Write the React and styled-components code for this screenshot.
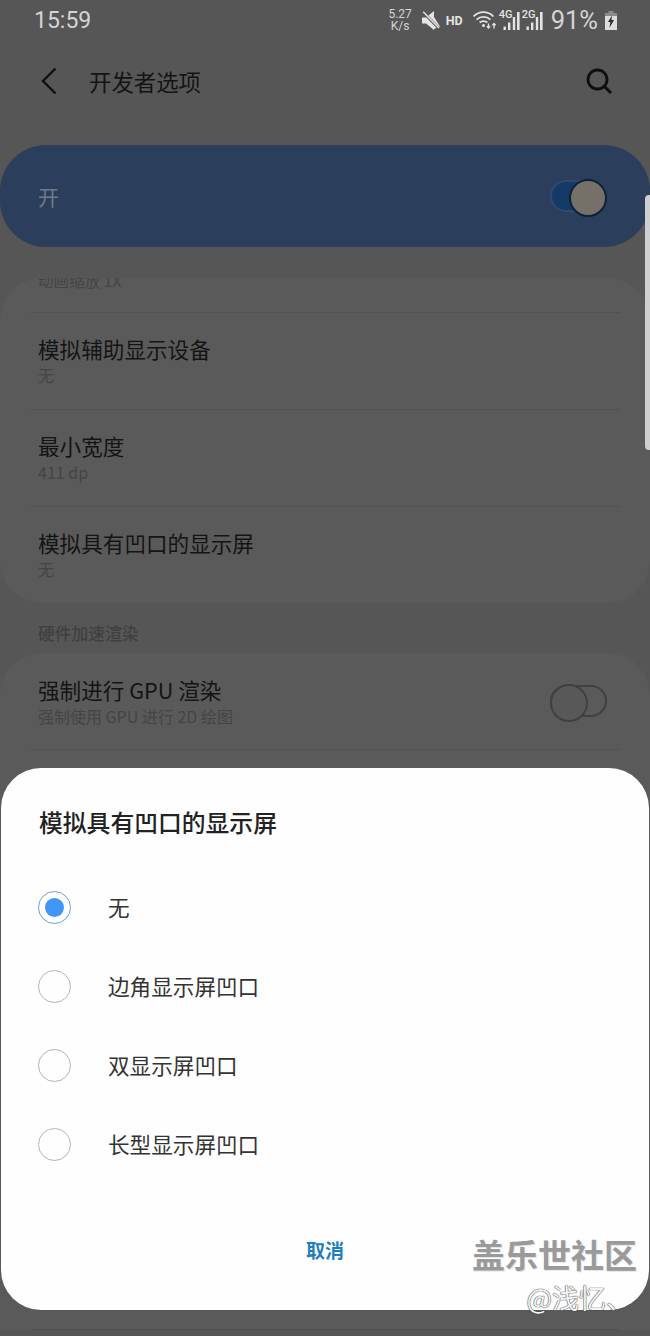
import React from "react";
import styled, { createGlobalStyle } from "styled-components";

const CJK = `"Noto Sans CJK SC", "Noto Sans", sans-serif`;

const GlobalStyle = createGlobalStyle`
  html, body {
    margin: 0;
    padding: 0;
    background: #555555;
  }
  * {
    box-sizing: border-box;
  }
`;

const App = () => {
  return (
    <Page>
      <GlobalStyle />
      <StatusBar>
        <Clock>15:59</Clock>
        <StatusIcons>
          <NetSpeed>
            <span>5.27</span>
            <span>K/s</span>
          </NetSpeed>
          <MuteIcon />
          <HdLabel>HD</HdLabel>
          <WifiIcon />
          <SignalIcon label="4G" />
          <SignalIcon label="2G" />
          <Battery>91%</Battery>
          <BatteryIcon />
        </StatusIcons>
      </StatusBar>

      <Toolbar>
        <ToolbarLeft>
          <svg width="20" height="28" viewBox="0 0 20 28" fill="none">
            <path d="M16.5 1.5 L4 14 L16.5 26.5" stroke="#0f0f0f" strokeWidth="2.4" />
          </svg>
          <ToolbarTitle>开发者选项</ToolbarTitle>
        </ToolbarLeft>
        <svg width="30" height="30" viewBox="0 0 30 30" fill="none">
          <circle cx="13.5" cy="13.5" r="9.5" stroke="#0f0f0f" strokeWidth="2.8" />
          <path d="M20 20 L27 27" stroke="#0f0f0f" strokeWidth="3" />
        </svg>
      </Toolbar>

      <MasterBar>
        <MasterLabel>开</MasterLabel>
        <Switch $on />
      </MasterBar>

      <ClippedCard>
        <ClippedText>动画缩放 1X</ClippedText>
        <Divider />
        <Row title="模拟辅助显示设备" sub="无" />
        <Divider />
        <Row title="最小宽度" sub="411 dp" />
        <Divider />
        <Row title="模拟具有凹口的显示屏" sub="无" />
      </ClippedCard>

      <SectionTitle>硬件加速渲染</SectionTitle>

      <Card>
        <SwitchRow>
          <div>
            <RowTitle>强制进行 GPU 渲染</RowTitle>
            <RowSub>强制使用 GPU 进行 2D 绘图</RowSub>
          </div>
          <Switch />
        </SwitchRow>
        <Divider />
        <CoveredRows />
        <Divider />
      </Card>

      <ScrollThumb />

      <Dialog>
        <DialogTitle>模拟具有凹口的显示屏</DialogTitle>
        <Options>
          <Option>
            <Radio $checked />
            <OptionLabel>无</OptionLabel>
          </Option>
          <Option>
            <Radio />
            <OptionLabel>边角显示屏凹口</OptionLabel>
          </Option>
          <Option>
            <Radio />
            <OptionLabel>双显示屏凹口</OptionLabel>
          </Option>
          <Option>
            <Radio />
            <OptionLabel>长型显示屏凹口</OptionLabel>
          </Option>
        </Options>
        <DialogActions>
          <CancelButton>取消</CancelButton>
        </DialogActions>
      </Dialog>

      <Watermark>
        <WatermarkName>盖乐世社区</WatermarkName>
        <WatermarkUser>@浅忆、</WatermarkUser>
      </Watermark>
    </Page>
  );
};

const Row = ({ title, sub }) => (
  <PlainRow>
    <RowTitle>{title}</RowTitle>
    <RowSub>{sub}</RowSub>
  </PlainRow>
);

const MuteIcon = () => (
  <MuteSvg width="18" height="19" viewBox="0 0 18 19">
    <path d="M0 6.5 H4 L12 0 V19 L4 12.5 H0 Z M12 6 L18 15.5 L12 18 Z" fill="#e4e4e4" />
    <path d="M1 1 L17 17.5" stroke="#555555" strokeWidth="2.8" />
    <path d="M1.2 0.8 L17 17" stroke="#e4e4e4" strokeWidth="1.5" />
  </MuteSvg>
);

const WifiIcon = () => (
  <WifiSvg width="24" height="18" viewBox="0 0 24 18" fill="none" stroke="#e4e4e4" strokeWidth="1.8">
    <path d="M0.6 5.5 C6 -0.3 15 -0.3 20.4 5.5" />
    <path d="M3.6 8.6 C7.5 5 13.5 5 17.4 8.6" />
    <path d="M6.6 11.6 C8.8 10 12.2 10 14.4 11.6" />
    <circle cx="10.5" cy="14.6" r="1.5" fill="#e4e4e4" stroke="none" />
    <path d="M15.5 12.5 V17 M13.9 15.3 L15.5 17 L17.1 15.3" strokeWidth="1.3" />
    <path d="M21 17.5 V12.5 M19.4 14.2 L21 12.5 L22.6 14.2" strokeWidth="1.3" />
  </WifiSvg>
);

const SignalIcon = ({ label }) => (
  <SignalWrap>
    <SignalLabel>{label}</SignalLabel>
    <svg width="21" height="19" viewBox="0 0 21 19" fill="#e4e4e4">
      <rect x="4.5" y="15.5" width="2.4" height="3.5" />
      <rect x="9" y="11.5" width="2.4" height="7.5" />
      <rect x="13.8" y="6" width="2.4" height="13" />
      <rect x="18" y="1" width="2.6" height="18" />
    </svg>
  </SignalWrap>
);

const BatteryIcon = () => (
  <BatterySvg width="12" height="19" viewBox="0 0 12 19">
    <rect x="3.5" y="0" width="5" height="2" fill="#8c8c8c" />
    <rect x="0" y="2" width="12" height="3" fill="#8c8c8c" />
    <rect x="0" y="5" width="12" height="14" fill="#dcdcdc" />
    <path d="M7 4.5 L3 11 H5.4 L4.4 17 L9 9 H6.4 Z" fill="#2a2a2a" />
  </BatterySvg>
);

export default App;

const Page = styled.div`
  position: relative;
  width: 650px;
  height: 1336px;
  overflow: hidden;
  background: #565656;
  font-family: ${CJK};
`;

const StatusBar = styled.div`
  display: flex;
  align-items: center;
  justify-content: space-between;
  height: 40px;
  padding: 0 33px 0 34px;
`;

const Clock = styled.div`
  font-family: Roboto, sans-serif;
  font-size: 23px;
  color: #d4d4d4;
`;

const StatusIcons = styled.div`
  display: flex;
  align-items: center;
`;

const NetSpeed = styled.div`
  display: flex;
  flex-direction: column;
  align-items: center;
  width: 23px;
  font-family: Roboto, sans-serif;
  font-size: 12px;
  line-height: 12px;
  color: #d4d4d4;
`;

const MuteSvg = styled.svg`
  margin-left: 10px;
`;

const HdLabel = styled.span`
  width: 16px;
  margin-left: 6px;
  font-family: Roboto, sans-serif;
  font-size: 12.5px;
  font-weight: 700;
  color: #e4e4e4;
`;

const WifiSvg = styled.svg`
  margin-left: 11px;
`;

const SignalWrap = styled.div`
  position: relative;
  width: 21px;
  height: 19px;
  margin-left: 2px;
`;

const SignalLabel = styled.span`
  position: absolute;
  top: -2px;
  left: 0;
  font-family: Roboto, sans-serif;
  font-size: 11px;
  line-height: 12px;
  font-weight: 500;
  color: #e4e4e4;
`;

const Battery = styled.span`
  margin-left: 8px;
  font-family: Roboto, sans-serif;
  font-size: 25.5px;
  line-height: 30px;
  color: #d4d4d4;
`;

const BatterySvg = styled.svg`
  margin-left: 7px;
`;

const Toolbar = styled.div`
  display: flex;
  align-items: center;
  justify-content: space-between;
  height: 82px;
  padding: 0 36px 0 39px;
`;

const ToolbarLeft = styled.div`
  display: flex;
  align-items: center;
  gap: 30px;
`;

const ToolbarTitle = styled.div`
  font-size: 22.4px;
  color: #141414;
`;

const MasterBar = styled.div`
  display: flex;
  align-items: center;
  justify-content: space-between;
  height: 102px;
  margin-top: 23px;
  padding: 0 43px 0 38px;
  border-radius: 46px;
  background: #2b3f5c;
`;

const MasterLabel = styled.div`
  font-size: 21px;
  color: #6f7a88;
`;

const Switch = styled.div`
  position: relative;
  width: 57px;
  height: 32px;
  border-radius: 16px;
  background: ${(p) => (p.$on ? "#143a68" : "transparent")};
  border: 2px solid ${(p) => (p.$on ? "#2f4a6d" : "#404040")};

  &::after {
    content: "";
    position: absolute;
    top: -3px;
    ${(p) => (p.$on ? "right: -2px;" : "left: -2px;")}
    width: 34px;
    height: 34px;
    border-radius: 50%;
    background: ${(p) => (p.$on ? "#757168" : "#585858")};
    border: 2px solid ${(p) => (p.$on ? "#0d2138" : "#404040")};
  }
`;

const ClippedCard = styled.div`
  margin-top: 31px;
  border-radius: 42px;
  background: #5a5a5a;
  overflow: hidden;
`;

const ClippedText = styled.div`
  height: 42px;
  margin-top: -8px;
  padding-left: 38px;
  font-size: 15.6px;
  line-height: 20px;
  color: #454545;
`;

const Divider = styled.div`
  height: 1px;
  margin: 0 30px;
  background: #525252;
`;

const PlainRow = styled.div`
  display: flex;
  flex-direction: column;
  justify-content: center;
  height: 96px;
  padding: 0 38px 2px;
`;

const RowTitle = styled.div`
  font-size: 21.6px;
  line-height: 30px;
  color: #141414;
`;

const RowSub = styled.div`
  font-size: 16px;
  line-height: 22px;
  color: #454545;
`;

const SectionTitle = styled.div`
  height: 50px;
  padding: 18px 0 0 38px;
  font-size: 16.8px;
  line-height: 24px;
  font-weight: 500;
  color: #404040;
`;

const Card = styled.div`
  border-radius: 42px 42px 0 0;
  background: #5a5a5a;
`;

const SwitchRow = styled.div`
  display: flex;
  align-items: center;
  justify-content: space-between;
  height: 96px;
  padding: 0 43px 0 38px;
`;

/* rows behind the dialog, nothing of them shows but the last divider */
const CoveredRows = styled.div`
  height: 579px;
`;

const ScrollThumb = styled.div`
  position: absolute;
  top: 195px;
  right: 0;
  width: 5px;
  height: 255px;
  border-radius: 4px 0 0 4px;
  background: #cfcfcf;
`;

const Dialog = styled.div`
  position: absolute;
  left: 1px;
  right: 1px;
  top: 768px;
  height: 542px;
  border-radius: 40px;
  background: #fefefe;
  padding: 37px 0 0 37px;
`;

const DialogTitle = styled.div`
  padding-left: 1px;
  font-size: 23.8px;
  line-height: 34px;
  font-weight: 500;
  color: #222222;
`;

const Options = styled.div`
  display: flex;
  flex-direction: column;
  gap: 46px;
  margin-top: 52px;
`;

const Option = styled.div`
  display: flex;
  align-items: center;
  gap: 37px;
  height: 33px;
`;

const Radio = styled.div`
  display: flex;
  align-items: center;
  justify-content: center;
  width: 33px;
  height: 33px;
  border-radius: 50%;
  border: 1.5px solid ${(p) => (p.$checked ? "#6f9fd0" : "#b4b4b4")};

  &::after {
    content: "";
    display: ${(p) => (p.$checked ? "block" : "none")};
    width: 19px;
    height: 19px;
    border-radius: 50%;
    background: #4096f8;
  }
`;

const OptionLabel = styled.div`
  padding-bottom: 2px;
  font-size: 21.6px;
  color: #333333;
`;

const DialogActions = styled.div`
  display: flex;
  margin-top: 76px;
  padding-left: 268px;
`;

const CancelButton = styled.div`
  font-size: 19px;
  line-height: 26px;
  font-weight: 700;
  color: #1e7fc0;
`;

const Watermark = styled.div`
  position: absolute;
  right: 13px;
  top: 1232px;
  display: flex;
  flex-direction: column;
  align-items: flex-end;
`;

const WatermarkName = styled.div`
  font-size: 33px;
  line-height: 44px;
  font-weight: 700;
  color: #9a9a9a;
  text-shadow: 1px 1px 0 #e4e4e4;
`;

const WatermarkUser = styled.div`
  margin: 4px 4px 0 0;
  font-size: 27px;
  line-height: 36px;
  color: #f4f4f4;
  text-shadow: 0 0 1px #333333, 0 0 1px #333333;
`;
